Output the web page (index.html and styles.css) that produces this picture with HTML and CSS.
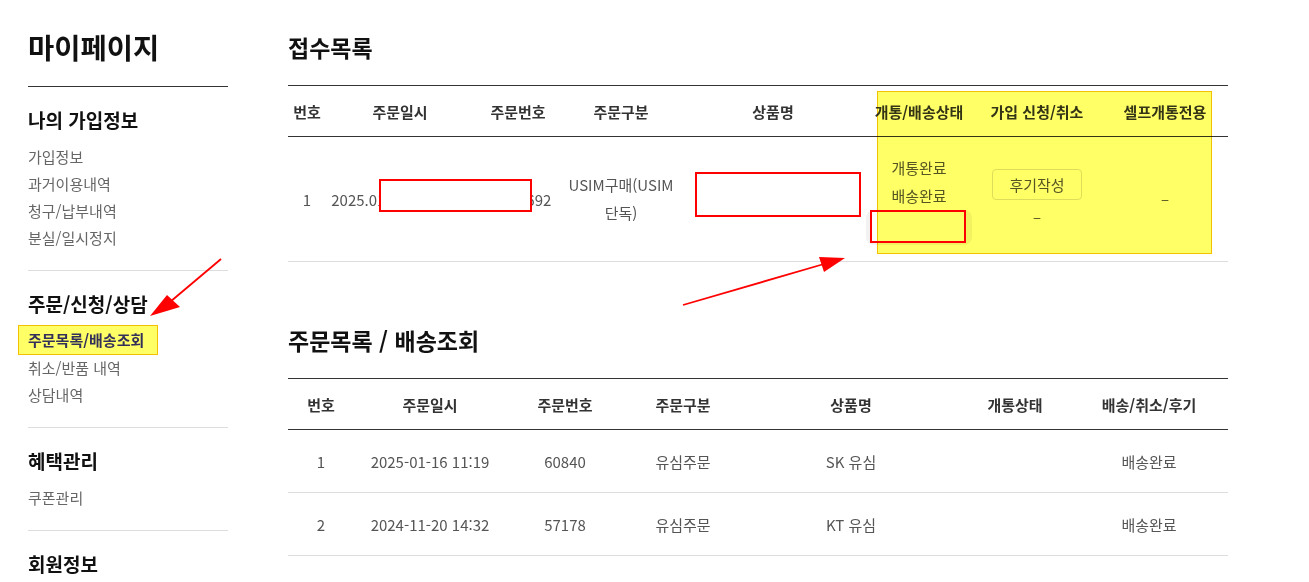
FILE: index.html
```html
<!DOCTYPE html>
<html lang="ko">
<head>
    <meta charset="UTF-8">
    <meta name="viewport" content="width=device-width, initial-scale=1.0">
    <title>마이페이지 - 주문목록/배송조회</title>
    <link rel="stylesheet" href="styles.css">
</head>
<body>

<div class="page">
    <aside class="side">
        <h1 class="side-title">마이페이지</h1>

        <div class="side-group">
            <h2>나의 가입정보</h2>
            <ul>
                <li>가입정보</li>
                <li>과거이용내역</li>
                <li>청구/납부내역</li>
                <li>분실/일시정지</li>
            </ul>
        </div>

        <div class="side-group">
            <h2>주문/신청/상담</h2>
            <ul>
                <li><span class="active">주문목록/배송조회</span></li>
                <li>취소/반품 내역</li>
                <li>상담내역</li>
            </ul>
        </div>

        <div class="side-group">
            <h2>혜택관리</h2>
            <ul>
                <li>쿠폰관리</li>
            </ul>
        </div>

        <div class="side-group">
            <h2>회원정보</h2>
        </div>
    </aside>

    <main class="content">
        <section class="board">
            <h2 class="board-title">접수목록</h2>
            <table class="list">
                <colgroup>
                    <col style="width:38px">
                    <col style="width:148px">
                    <col style="width:88px">
                    <col style="width:118px">
                    <col style="width:186px">
                    <col style="width:106px">
                    <col style="width:130px">
                    <col style="width:126px">
                </colgroup>
                <thead>
                    <tr>
                        <th>번호</th>
                        <th>주문일시</th>
                        <th>주문번호</th>
                        <th>주문구분</th>
                        <th>상품명</th>
                        <th>개통/배송상태</th>
                        <th>가입 신청/취소</th>
                        <th>셀프개통전용</th>
                    </tr>
                </thead>
                <tbody>
                    <tr class="tall">
                        <td>1</td>
                        <td class="nowrap">2025.01.16 11:19:50</td>
                        <td class="nowrap">25011692</td>
                        <td class="wrap">USIM구매(USIM 단독)</td>
                        <td>KT 유심 셀프개통</td>
                        <td>
                            <div class="line">개통완료</div>
                            <div class="line">배송완료</div>
                            <div class="ghost-box"></div>
                        </td>
                        <td>
                            <button class="btn-review">후기작성</button>
                            <div class="dash under">–</div>
                        </td>
                        <td><div class="dash">–</div></td>
                    </tr>
                </tbody>
            </table>
        </section>

        <section class="board board-second">
            <h2 class="board-title">주문목록 / 배송조회</h2>
            <table class="list">
                <colgroup>
                    <col style="width:66px">
                    <col style="width:152px">
                    <col style="width:118px">
                    <col style="width:118px">
                    <col style="width:218px">
                    <col style="width:110px">
                    <col style="width:158px">
                </colgroup>
                <thead>
                    <tr>
                        <th>번호</th>
                        <th>주문일시</th>
                        <th>주문번호</th>
                        <th>주문구분</th>
                        <th>상품명</th>
                        <th>개통상태</th>
                        <th>배송/취소/후기</th>
                    </tr>
                </thead>
                <tbody>
                    <tr>
                        <td>1</td>
                        <td>2025-01-16 11:19</td>
                        <td>60840</td>
                        <td>유심주문</td>
                        <td>SK 유심</td>
                        <td></td>
                        <td>배송완료</td>
                    </tr>
                    <tr>
                        <td>2</td>
                        <td>2024-11-20 14:32</td>
                        <td>57178</td>
                        <td>유심주문</td>
                        <td>KT 유심</td>
                        <td></td>
                        <td>배송완료</td>
                    </tr>
                </tbody>
            </table>
        </section>
    </main>

    <!-- annotations drawn over the screenshot -->
    <div class="mark mark-order"></div>
    <div class="mark mark-product"></div>
    <div class="mark mark-status"></div>
    <div class="spot"></div>

    <svg class="arrows" width="1309" height="582" viewBox="0 0 1309 582">
        <line x1="221" y1="259" x2="170" y2="302" stroke="#ff0000" stroke-width="1.8"/>
        <polygon points="150,316 167,295 180,307" fill="#ff0000"/>
        <line x1="683" y1="305" x2="824" y2="264" stroke="#ff0000" stroke-width="1.8"/>
        <polygon points="845,258 819,257 824,272" fill="#ff0000"/>
    </svg>
</div>

</body>
</html>
```

FILE: styles.css
```css
body {
    margin: 0;
    font-family: "Noto Sans CJK KR", "Noto Sans", sans-serif;
    color: #222;
    background: #fff;
}
.page {
    position: relative;
    display: flex;
    align-items: flex-start;
    width: 1309px;
    height: 582px;
    overflow: hidden;
    padding-top: 28px;
    box-sizing: border-box;
}

/* sidebar */
.side {
    width: 200px;
    margin-left: 28px;
    flex-shrink: 0;
}
.side-title {
    margin: 0;
    font-size: 28.5px;
    line-height: 38px;
    font-weight: 700;
    color: #111;
    padding-bottom: 20px;
    border-bottom: 1px solid #333;
}
.side-group {
    padding: 19px 0;
}
.side-group + .side-group {
    border-top: 1px solid #ddd;
}
.side-group h2 {
    margin: 0 0 9px;
    font-size: 19px;
    line-height: 28px;
    font-weight: 700;
    color: #111;
}
.side-group ul {
    margin: 0;
    padding: 0;
    list-style: none;
}
.side-group li {
    font-size: 15px;
    line-height: 27px;
    color: #666;
}
.side-group .active {
    display: block;
    width: fit-content;
    margin: -2px 0 -1px -10px;
    padding: 0 13px 0 9px;
    line-height: 28px;
    background: #ffff66;
    border: 1px solid #f2c200;
    color: #33305a;
    font-weight: 700;
}

/* content */
.content {
    margin-left: 60px;
    width: 940px;
}
.board-title {
    margin: 0 0 19px;
    font-size: 23px;
    line-height: 38px;
    font-weight: 700;
    color: #111;
}
.board-second {
    margin-top: 59px;
}
.list {
    width: 940px;
    border-collapse: collapse;
    table-layout: fixed;
    border-top: 1px solid #333;
}
.list th {
    height: 50px;
    padding: 0;
    font-size: 15px;
    font-weight: 700;
    color: #333;
    text-align: center;
    white-space: nowrap;
    border-bottom: 1px solid #333;
}
.list td {
    height: 62px;
    padding: 0;
    font-size: 15px;
    color: #555;
    text-align: center;
    word-break: keep-all;
    border-bottom: 1px solid #ddd;
}
.list tr.tall td {
    height: 124px;
}
.list td.nowrap {
    white-space: nowrap;
    overflow: visible;
}
.list td.wrap {
    line-height: 28px;
}
.line {
    line-height: 28px;
}
.ghost-box {
    height: 35px;
    border-radius: 8px;
    background: #f2f2f2;
}
.btn-review {
    width: 90px;
    height: 31px;
    padding: 0;
    font-family: inherit;
    font-size: 15px;
    color: #555;
    background: #fff;
    border: 1px solid #ddd;
    border-radius: 4px;
}
.dash {
    line-height: 24px;
    color: #555;
}
.dash.under {
    margin-top: 5px;
}

/* annotations */
.mark {
    position: absolute;
    box-sizing: border-box;
    background: #fff;
    border: 2px solid #ff0000;
}
.mark-order {
    left: 379px;
    top: 179px;
    width: 153px;
    height: 33px;
}
.mark-product {
    left: 695px;
    top: 172px;
    width: 166px;
    height: 45px;
}
.mark-status {
    left: 870px;
    top: 210px;
    width: 96px;
    height: 33px;
}
.spot {
    position: absolute;
    left: 877px;
    top: 91px;
    width: 335px;
    height: 163px;
    box-sizing: border-box;
    background: #ffff66;
    mix-blend-mode: multiply;
    border: 1px solid #f2c200;
}
.arrows {
    position: absolute;
    left: 0;
    top: 0;
    pointer-events: none;
}
```
